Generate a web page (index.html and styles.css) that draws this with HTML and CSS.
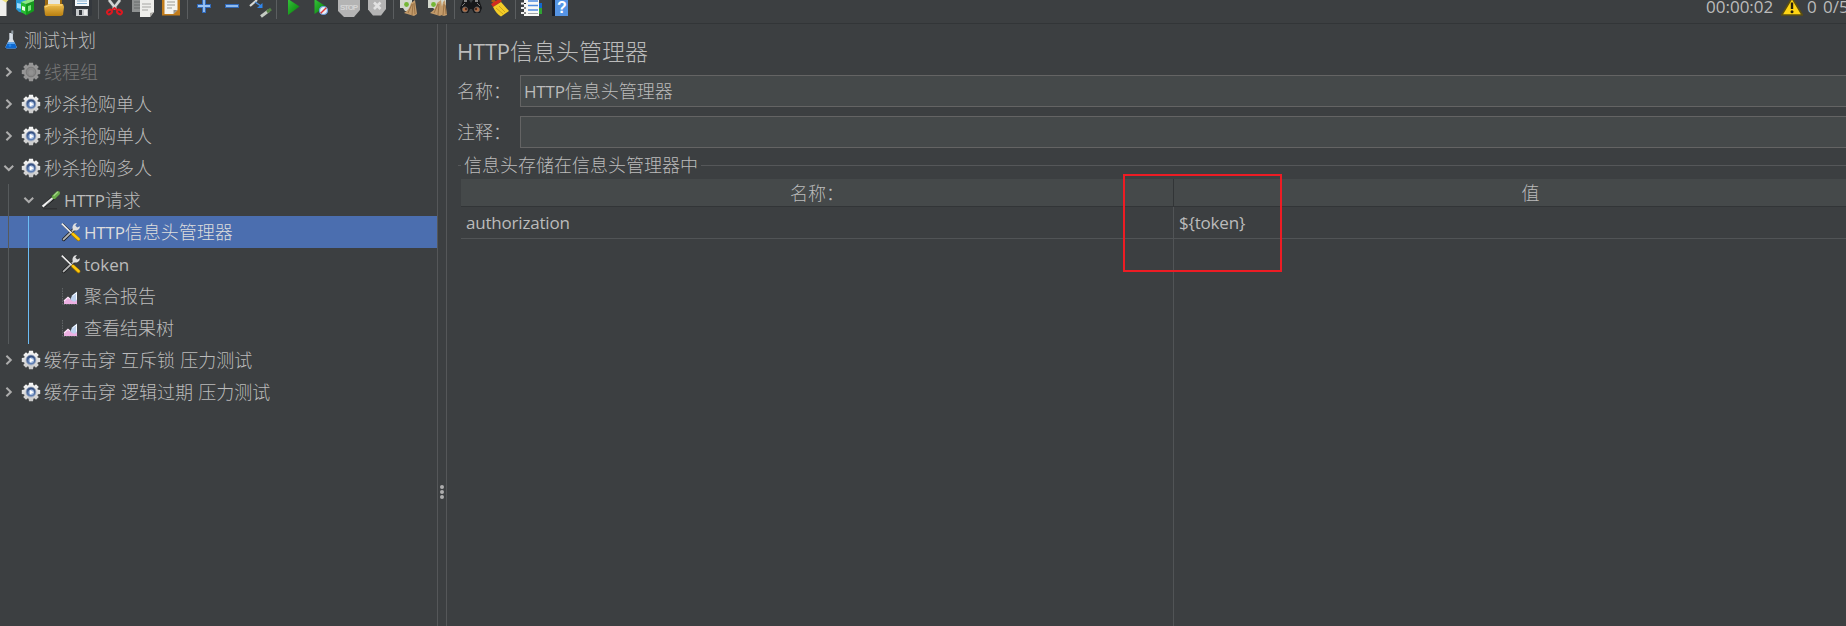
FILE: index.html
```
<!DOCTYPE html>
<html lang="zh-CN">
<head>
<meta charset="utf-8">
<title>HTTP信息头管理器</title>
<link rel="stylesheet" href="styles.css">
</head>
<body>
<svg class="defs" width="0" height="0" aria-hidden="true">
  <defs>
    <linearGradient id="gold" x1="0" y1="0" x2="0" y2="1"><stop offset="0" stop-color="#f0c050"/><stop offset="1" stop-color="#b97f10"/></linearGradient>
    <linearGradient id="green" x1="0" y1="0" x2="1" y2="1"><stop offset="0" stop-color="#35c43a"/><stop offset="1" stop-color="#057a08"/></linearGradient>
    <linearGradient id="silver" x1="0" y1="0" x2="0" y2="1"><stop offset="0" stop-color="#f8f8f8"/><stop offset="1" stop-color="#c9c9c9"/></linearGradient>
    <linearGradient id="lens" x1="0" y1="0" x2="0" y2="1"><stop offset="0" stop-color="#2c4677"/><stop offset="1" stop-color="#6788bd"/></linearGradient>
    <symbol id="teeth" viewBox="0 0 20 20">
      <circle cx="10" cy="10" r="7.2"/>
      <path d="M8 .8h4l.6 3.4H7.400zM8 19.200h4l.6-3.400H7.400zM.8 8v4l3.400.6V7.400zM19.200 8v4l-3.400.6V7.400zM2.200 5l2.800-2.800 2.600 2.200-3.200 3.200zM15 2.200L17.800 5l-2.200 2.600-3.200-3.200zM17.800 15L15 17.800l-2.600-2.200 3.200-3.200zM5 17.800L2.200 15l2.200-2.600 3.200 3.200z"/>
    </symbol>
    <symbol id="gear" viewBox="0 0 20 20">
      <use href="#teeth" width="20" height="20" fill="url(#silver)"/>
      <circle cx="10" cy="10" r="5" fill="url(#lens)" stroke="#a3adc0" stroke-width=".8"/>
      <circle cx="10.300" cy="10.300" r="2.700" fill="#a9bfe2"/>
      <path d="M9 8l3.600 2.200L9 12.400z" fill="#fff"/>
    </symbol>
    <symbol id="gear-off" viewBox="0 0 20 20">
      <use href="#teeth" width="20" height="20" fill="#969696"/>
      <circle cx="10" cy="10" r="4.800" fill="#888" stroke="#777" stroke-width="1"/>
      <circle cx="10" cy="10.500" r="2.500" fill="#929292"/>
    </symbol>
    <symbol id="flask" viewBox="0 0 14 20">
      <ellipse cx="7" cy="18" rx="6.500" ry="1.300" fill="#27303c"/>
      <path d="M5.300 3h3.600v6l3.800 8q.2 1.400-1.500 1.400H3Q1.300 18.400 1.500 17l3.800-8z" fill="#d6dde4"/>
      <path d="M4 12.500h6.500l2.200 4.600q0 1.300-1.500 1.300H3q-1.500 0-1.500-1.300z" fill="#0e68cf"/>
      <path d="M4 12.500h6.500l.8 1.500H3.300z" fill="#5aa6ef"/>
      <path d="M7.300.5h2v3.500h-2z" fill="#929da5"/>
      <circle cx="6" cy="15.500" r="1.300" fill="#238af0"/>
    </symbol>
    <symbol id="dropper" viewBox="0 0 20 20">
      <path d="M2 18.800h14" stroke="#2b2d2e" stroke-width="1"/>
      <path d="M1 17.200l1.500-2.500L10.500 6.500l3 3-8.500 7-3 1.300z" fill="#1c1d1e"/>
      <path d="M1.600 16.600L12 7.800" stroke="#f2f2f2" stroke-width="2.200"/>
      <path d="M4.500 15.500l8-7" stroke="#8e9494" stroke-width="1"/>
      <path d="M10.800 5.200l4 4" stroke="#315823" stroke-width="1.800"/>
      <path d="M13 7L17 3" stroke="#69ab49" stroke-width="4" stroke-linecap="round"/>
      <path d="M13 5.500l3.500-3.200" stroke="#a2d487" stroke-width="1.300" stroke-linecap="round"/>
    </symbol>
    <symbol id="tools" viewBox="0 0 20 20">
      <path d="M2.600 17.400L13.500 7" stroke="#1d1e1f" stroke-width="3.400" stroke-linecap="round"/>
      <path d="M2.600 17.400L13.500 7" stroke="#b4b5b5" stroke-width="1.900" stroke-linecap="round"/>
      <path d="M12 8C10.500 4.500 12.500 1 16 1L14.300 3.600l1.900 1.800L18.800 4.200c.3 3.200-3 5.400-6.800 3.800z" fill="#dedede"/>
      <path d="M1.200 1.700L11.500 11.500" stroke="#252525" stroke-width="2.200"/>
      <path d="M.8 1.600L11 11.500" stroke="#ededed" stroke-width="1.700"/>
      <path d="M12 12.200l5.500 5.200" stroke="#a67800" stroke-width="3.600" stroke-linecap="round"/>
      <path d="M12.100 12.100l5.500 5.100" stroke="#ffc90b" stroke-width="2.500" stroke-linecap="round"/>
    </symbol>
    <symbol id="chart" viewBox="0 0 20 20">
      <path d="M1.500 2v16.500H17.500" fill="none" stroke="#606466" stroke-dasharray="1.500 1"/>
      <path d="M3 18v-3.500l4-3.500 2 2 3 2 4-1.500v4.500z" fill="#ecb0e2"/>
      <path d="M3 15l4-3.700L9 13" fill="none" stroke="#fbe6f7" stroke-width="1.200"/>
      <path d="M9.300 13.500L11 9.500 16 5.500v8.500q-3 3.500-6.700-.5z" fill="#bed2ee"/>
      <path d="M11.500 10l4-3.300v7" fill="none" stroke="#f7fbff" stroke-width="1"/>
    </symbol>
    <symbol id="closed" viewBox="0 0 12 12"><path d="M4.400 1.700L8.800 6l-4.400 4.300" fill="none" stroke="#adadad" stroke-width="2"/></symbol>
    <symbol id="open" viewBox="0 0 12 12"><path d="M2.400 3.800L6.800 8l4.400-4.200" fill="none" stroke="#adadad" stroke-width="2"/></symbol>
  </defs>
</svg>

<div class="app">
  <header class="toolbar">
    <svg class="tool" width="11" viewBox="0 0 11 23"><path d="M0 0h6.500v16H0z" fill="#f0f0ed"/><path d="M2 0h6.500L6 2.500z" fill="#efe27a"/></svg>
    <svg class="tool" width="29" viewBox="11 0 29 23"><path d="M16 0h10v13l-7-1-3-3z" fill="#2798d4"/><path d="M17 3l5 1v5l-5-1z" fill="#9adcff"/><path d="M21 2l5 2v11l-5-3z" fill="#28bd32"/><path d="M26 4l8-3v10l-8 4.500z" fill="#139a1c"/><path d="M21 2l6-2h7v1l-8 3z" fill="#8bea83"/><path d="M22 6l3 1v4l-3-1z" fill="#e4ffe2"/><path d="M28 6l3-1v5l-3 1.500z" fill="#7fe07f"/></svg>
    <svg class="tool" width="29" viewBox="40 0 29 23"><path d="M45 0h17v7H45z" fill="#9b6912"/><path d="M48 0h12v5H48z" fill="#e7e7df"/><path d="M44 6l5-2 14 0 1 3-1 8-2 1H46l-1-1z" fill="url(#gold)"/><path d="M45 7l5-2h12" fill="none" stroke="#ffd981"/></svg>
    <svg class="tool" width="29" viewBox="69 0 29 23"><path d="M72 0h20v15l-1 1H74l-2-2z" fill="#34383d"/><path d="M75 0h14v6H75z" fill="#f4f7fa"/><path d="M77 1h10M77 3.500h10" stroke="#83b0d2"/><path d="M76 9h12v7H76z" fill="#c5c8ca"/><path d="M79 10h3v5h-3z" fill="#34383d"/><path d="M84 10h3v5h-3z" fill="#eee"/></svg>
    <svg class="tool" width="1" viewBox="98 0 1 23"><path d="M98 0h1v19h-1z" fill="#5b5e60"/></svg>
    <svg class="tool" width="29" viewBox="99 0 29 23"><path d="M109 0l7 9M120 0l-7 9" stroke="#4c4f50" stroke-width="4"/><path d="M109 0l7 9M120 0l-7 9" stroke="#d3d5d4" stroke-width="2.600"/><ellipse cx="109.500" cy="12" rx="2.600" ry="2" fill="none" stroke="#dd1820" stroke-width="2" transform="rotate(-35 109.500 12)"/><ellipse cx="119.500" cy="12" rx="2.600" ry="2" fill="none" stroke="#dd1820" stroke-width="2" transform="rotate(35 119.500 12)"/><path d="M112 10l2.500-2 2.500 2" fill="none" stroke="#df1c22" stroke-width="2"/></svg>
    <svg class="tool" width="29" viewBox="128 0 29 23"><path d="M132 0h14v12h-14z" fill="#8e9191"/><path d="M134 2h6M134 5h6M134 8h6" stroke="#696c6d"/><path d="M140 0h14v12l-4 5h-10z" fill="#eeeeeb"/><path d="M142 4h9M142 7h9M142 10h6" stroke="#a6a6a3"/><path d="M154 12l-4 5v-4z" fill="#acaaa5"/></svg>
    <svg class="tool" width="30" viewBox="157 0 30 23"><path d="M162 0h18v15.500h-18z" fill="#c17c1c"/><path d="M164.500 0h13v10l-4 4h-9z" fill="#f4f4f0"/><path d="M167 2h8M167 5h8M167 8h5" stroke="#9c9d99"/><path d="M177.500 10l-4 4v-4z" fill="#96958f"/></svg>
    <svg class="tool" width="1" viewBox="187 0 1 23"><path d="M187 0h1v19h-1z" fill="#5b5e60"/></svg>
    <svg class="tool" width="30" viewBox="188 0 30 23"><path d="M197 6h14M204 -1v14" stroke="#3069b9" stroke-width="4"/><path d="M198 6h12M204 0v12" stroke="#9ac3f2" stroke-width="1.800"/></svg>
    <svg class="tool" width="28" viewBox="218 0 28 23"><path d="M225 6h14" stroke="#3069b9" stroke-width="4"/><path d="M226 6h12" stroke="#9ac3f2" stroke-width="1.800"/></svg>
    <svg class="tool" width="30" viewBox="246 0 30 23"><path d="M250 6l7-6" stroke="#d7dad7" stroke-width="2.200"/><path d="M255 2l6 4" stroke="#488bd9" stroke-width="1.500"/><path d="M262.500 3v5H257z" fill="#2e86ed"/><path d="M261 16.500l8-6" stroke="#c5cbc3" stroke-width="3"/><path d="M267 12l4-3" stroke="#548244" stroke-width="3"/></svg>
    <svg class="tool" width="1" viewBox="276 0 1 23"><path d="M276 0h1v19h-1z" fill="#5b5e60"/></svg>
    <svg class="tool" width="29" viewBox="277 0 29 23"><path d="M288-1L299.500 6.500 288 15z" fill="url(#green)"/></svg>
    <svg class="tool" width="27" viewBox="306 0 27 23"><path d="M314.500-1L326 6.500 314.500 14z" fill="url(#green)"/><circle cx="323.500" cy="10.500" r="4" fill="#e9eef7" stroke="#6d9ddd" stroke-width="1.200"/><path d="M320.700 13.300l5.600-5.600" stroke="#df342f" stroke-width="1.400"/></svg>
    <svg class="tool" width="31" viewBox="333 0 31 23"><path d="M338 0h22v10l-6 7h-10l-6-6z" fill="#b4b4b4"/><text x="349" y="9.500" class="stop-label" textLength="18">STOP</text></svg>
    <svg class="tool" width="29" viewBox="364 0 29 23"><path d="M368 0h18v9l-5 6.500h-8l-5-6z" fill="#b4b4b4"/><path d="M374 2.500l6.500 6.500M380.500 2.500L374 9" stroke="#e2e2e2" stroke-width="2.600"/></svg>
    <svg class="tool" width="1" viewBox="393 0 1 23"><path d="M393 0h1v19h-1z" fill="#5b5e60"/></svg>
    <svg class="tool" width="29" viewBox="394 0 29 23"><path d="M400 0h12v6l-3 5h-4l-2-3h-3z" fill="#d3d7cc"/><circle cx="406.500" cy="4.500" r="2.400" fill="#74b735"/><path d="M411 3l4-3 2 14-3 2-10-3q6-4 7-10z" fill="#c29a6a"/><path d="M408 13l4-9M412 15l1-11M415 14l-1-11" stroke="#8b6337" stroke-width=".7"/></svg>
    <svg class="tool" width="31" viewBox="423 0 31 23"><path d="M428 0h18v6l-5 5h-4l-4-3h-5z" fill="#d3d7cc"/><circle cx="433.500" cy="4.500" r="2.400" fill="#74b735"/><path d="M437 3l4-3 2 14-3 2-10-3q6-4 7-10zM443 2l2-2 2 15-3 1-6-2q4-5 5-12z" fill="#c29a6a"/><path d="M434 13l4-9M438 15l1-11M443 15l1-11M446 14l-1-9" stroke="#8b6337" stroke-width=".7"/></svg>
    <svg class="tool" width="1" viewBox="454 0 1 23"><path d="M454 0h1v19h-1z" fill="#5b5e60"/></svg>
    <svg class="tool" width="31" viewBox="455 0 31 23"><path d="M463 0h6l2 3 2-3h6l3 8-2 5h-6l-2-4h-2l-2 4h-6l-2-5z" fill="#161719"/><path d="M464 1l3 0M475 1h3" stroke="#aaa" stroke-width="1.500"/><path d="M462 6l3-3M477 3l3 3" stroke="#777" stroke-width="1"/><circle cx="465" cy="9.500" r="2.600" fill="#b06c42" stroke="#666" stroke-width=".8"/><circle cx="477" cy="9.500" r="2.600" fill="#b06c42" stroke="#666" stroke-width=".8"/><circle cx="466" cy="9" r="1.200" fill="#512c1d"/><circle cx="476" cy="9" r="1.200" fill="#512c1d"/></svg>
    <svg class="tool" width="29" viewBox="486 0 29 23"><path d="M492 0l4 3" stroke="#a95f13" stroke-width="3"/><path d="M491 4l8-5 3 2-9 6z" fill="#d32b20"/><path d="M493 7l8-5 8 9-8 5.500q-5-3-8-9.500z" fill="#f3cc27"/><path d="M496 8l7 6M499 6l6 6" stroke="#c09b14" stroke-width=".8"/></svg>
    <svg class="tool" width="1" viewBox="515 0 1 23"><path d="M515 0h1v19h-1z" fill="#5b5e60"/></svg>
    <svg class="tool" width="32" viewBox="516 0 32 23"><path d="M538 3h4v5h-4z" fill="#1468cd"/><path d="M538 8h4v6h-4z" fill="#30a434"/><path d="M524 0h15v16h-15z" fill="#f8f8f5"/><path d="M528 1h10M528 5.500h10M528 10h10" stroke="#4e8bdf" stroke-width="1.300"/><path d="M528 13.500h10" stroke="#a1a5a8"/><path d="M521 3.500h5M521 8h5M521 13h5" stroke="#eee" stroke-width="2"/><path d="M524 3.500h2M524 8h2M524 13h2" stroke="#202020" stroke-width="1.200"/></svg>
    <svg class="tool" width="29" viewBox="548 0 29 23"><path d="M552 0h4v16h-4z" fill="#171d29"/><path d="M555 0h13v16h-13z" fill="#5594e4"/><text x="561.800" y="12.500" class="help-label">?</text></svg>
    <div class="status">
      <span class="clock">00:00:02</span>
      <svg class="warning" width="24" height="23" viewBox="0 0 24 23"><path d="M12-2L22.300 15H1.700z" fill="#ffd515" stroke="#5e500f" stroke-width="1.600" stroke-linejoin="round"/><path d="M12 2.500v6.500" stroke="#251f0c" stroke-width="2.400"/><circle cx="12" cy="11.800" r="1.500" fill="#251f0c"/></svg>
      <span class="errors">0</span>
      <span class="threads">0/5</span>
    </div>
  </header>

  <div class="workspace">
    <nav class="tree">
      <div class="node root"><svg class="flask"><use href="#flask"/></svg><span>测试计划</span></div>
      <div class="node level1 disabled"><svg class="arrow"><use href="#closed"/></svg><svg class="icon"><use href="#gear-off"/></svg><span>线程组</span></div>
      <div class="node level1"><svg class="arrow"><use href="#closed"/></svg><svg class="icon"><use href="#gear"/></svg><span>秒杀抢购单人</span></div>
      <div class="node level1"><svg class="arrow"><use href="#closed"/></svg><svg class="icon"><use href="#gear"/></svg><span>秒杀抢购单人</span></div>
      <div class="node level1"><svg class="arrow"><use href="#open"/></svg><svg class="icon"><use href="#gear"/></svg><span>秒杀抢购多人</span></div>
      <div class="node level2"><svg class="arrow"><use href="#open"/></svg><svg class="icon"><use href="#dropper"/></svg><span><span class="latin">HTTP</span>请求</span></div>
      <div class="node level3 selected"><svg class="icon"><use href="#tools"/></svg><span><span class="latin">HTTP</span>信息头管理器</span></div>
      <div class="node level3"><svg class="icon"><use href="#tools"/></svg><span class="latin token">token</span></div>
      <div class="node level3"><svg class="icon"><use href="#chart"/></svg><span>聚合报告</span></div>
      <div class="node level3"><svg class="icon"><use href="#chart"/></svg><span>查看结果树</span></div>
      <div class="node level1"><svg class="arrow"><use href="#closed"/></svg><svg class="icon"><use href="#gear"/></svg><span class="spaced">缓存击穿 互斥锁 压力测试</span></div>
      <div class="node level1"><svg class="arrow"><use href="#closed"/></svg><svg class="icon"><use href="#gear"/></svg><span class="spaced">缓存击穿 逻辑过期 压力测试</span></div>
    </nav>
    <div class="splitter"><i></i><i></i><i></i></div>
    <main class="editor">
      <h1 class="title"><span class="latin">HTTP</span>信息头管理器</h1>
      <div class="field"><span class="label">名称：</span><div class="input"><span class="latin">HTTP</span>信息头管理器</div></div>
      <div class="field"><span class="label">注释：</span><div class="input"></div></div>
      <div class="legend">信息头存储在信息头管理器中</div>
      <div class="table">
        <div class="head">名称：</div><div class="head">值</div>
        <div class="cell latin">authorization</div><div class="cell latin">${token}</div>
        <div class="blank"></div><div class="blank"></div>
      </div>
      <div class="highlight"></div>
    </main>
  </div>
</div>
</body>
</html>
```

FILE: styles.css
```
* { box-sizing: border-box; }
body {
  margin: 0;
  background: #3c3f41;
  color: #bbb;
  font: 300 18px/32px "Open Sans", "Noto Sans CJK SC", sans-serif;
  overflow: hidden;
}
svg { display: block; flex: none; }
.defs { position: absolute; }
.latin { font-size: 17px; font-weight: 400; letter-spacing: -0.2px; }
.app { width: 1846px; height: 626px; display: flex; flex-direction: column; overflow: hidden; }

.toolbar { height: 24px; flex: none; display: flex; border-bottom: 1px solid #323537; overflow: hidden; }
.tool { height: 23px; }
.stop-label { font: 700 8px "Liberation Sans", sans-serif; fill: #d4d4d4; text-anchor: middle; }
.help-label { font: 700 16px "Liberation Sans", sans-serif; fill: #fff; text-anchor: middle; }
.status { margin-left: auto; width: 140px; flex: none; display: flex; font-size: 17px; font-weight: 400; line-height: 14px; white-space: nowrap; }
.status span { flex: none; }
.clock { width: 74px; }
.errors { margin-left: 3px; width: 16px; }

.workspace { flex: 1; min-height: 0; display: flex; }
.tree {
  width: 437px;
  flex: none;
  white-space: nowrap;
}
.node { height: 32px; display: flex; align-items: center; }
.arrow { width: 12px; height: 12px; margin-right: 7px; }
.icon { width: 20px; height: 20px; margin-right: 3px; }
.flask { width: 14px; height: 20px; margin-right: 6px; }
.token { padding-top: 1px; letter-spacing: 0; }
.spaced { word-spacing: 0.4px; }
.root { padding-left: 4px; }
.level1 { padding-left: 2px; }
.level1 .icon { margin-left: -0.5px; margin-right: 3.5px; }
.level2 { padding-left: 22px; background: linear-gradient(#565a5c, #565a5c) 8px 0 / 1px 100% no-repeat; }
.level3 {
  padding-left: 61px;
  background: linear-gradient(#565a5c, #565a5c) 8px 0 / 1px 100% no-repeat, linear-gradient(#6cbdf5, #6cbdf5) 28px 0 / 1px 100% no-repeat;
}
.selected { background-color: #4b6eaf; color: #ddd; }
.disabled { color: #777; }

.splitter {
  width: 10px;
  flex: none;
  border: solid #555759;
  border-width: 0 1px;
  display: flex;
  flex-direction: column;
  align-items: center;
  gap: 1px;
  padding-top: 461px;
}
.splitter i { width: 4px; height: 4px; border-radius: 2px; background: #adadad; flex: none; }

.editor { flex: 1; min-width: 0; position: relative; display: flex; flex-direction: column; padding: 11px 0 0 10px; overflow: hidden; }
.title { margin: 0 0 8px; font-size: 23px; font-weight: 300; line-height: 32px; white-space: nowrap; }
.title .latin { font-size: 22px; }
.field { height: 32px; flex: none; margin-bottom: 9px; display: flex; width: 1430px; }
.label { width: 63px; flex: none; }
.input { flex: 1; border: 1px solid #646464; background: #45494a; padding-left: 3px; line-height: 30px; white-space: nowrap; }
.legend { height: 22px; flex: none; display: flex; align-items: center; gap: 3px; line-height: 22px; margin: -3px 0 3px 1px; width: 1430px; white-space: nowrap; }
.legend::before, .legend::after { content: ""; height: 1px; background: #555759; }
.legend::before { width: 3px; }
.legend::after { flex: 1; }
.table { flex: 1; width: 1426px; margin-left: 4px; display: grid; grid-template-columns: 713px 713px; grid-template-rows: 28px 32px 1fr; }
.head { background: #45494a; border-bottom: 1px solid #323537; text-align: center; line-height: 28px; }
.head:first-child { border-right: 1px solid #323537; }
.cell { border-bottom: 1px solid #515456; padding-left: 5px; line-height: 31px; }
.cell:nth-child(odd), .blank:nth-child(odd) { border-right: 1px solid #515456; }
.highlight { position: absolute; left: 676px; top: 150px; width: 159px; height: 98px; border: 2px solid #ed1c24; }
```
